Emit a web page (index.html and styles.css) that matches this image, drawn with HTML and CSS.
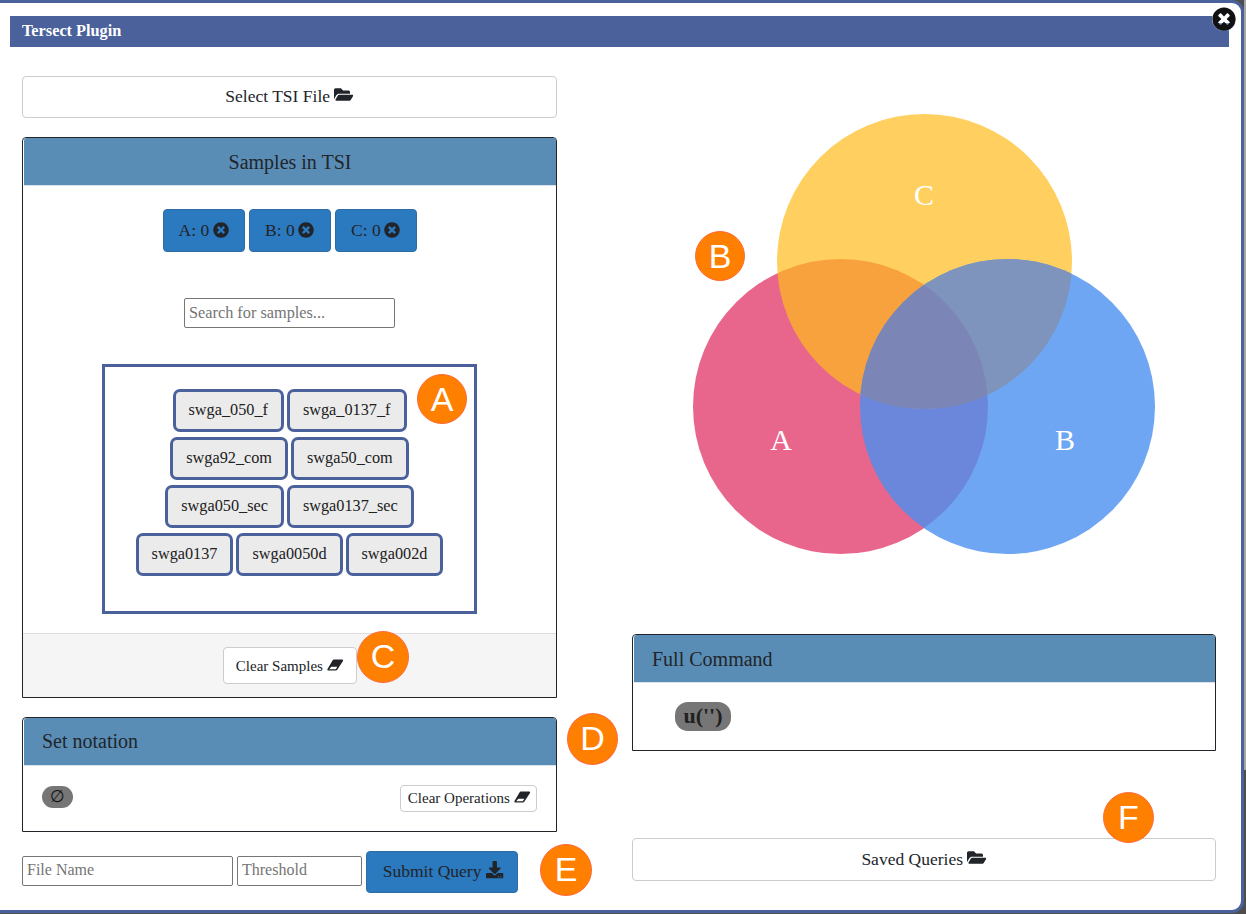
FILE: index.html
```html
<!DOCTYPE html>
<html lang="en">
<head>
    <meta charset="UTF-8">
    <meta name="viewport" content="width=device-width, initial-scale=1.0">
    <title>Tersect Plugin</title>
    <link rel="stylesheet" href="styles.css">
</head>
<body>

<svg class="icon-defs" width="0" height="0">
    <symbol id="i-folder" viewBox="0 0 576 512"><path d="M572.7 292.1L500.3 416.2C493.1 428.6 480 436 465.7 436H65c-18.5 0-30-20-20.7-36l72.4-124.1c7.2-12.4 20.3-19.9 34.6-19.9h400.7c18.5 0 30 20 20.7 36.1zM152 224h328v-48c0-26.5-21.500-48-48-48H272l-64-64H48C21.500 64 0 85.500 0 112v278l69.100-118.400C86.200 242.300 117.900 224 152 224z"/></symbol>
    <symbol id="i-times" viewBox="0 0 512 512"><path d="M256 8C119 8 8 119 8 256s111 248 248 248 248-111 248-248S393 8 256 8zm121.600 313.100c4.700 4.700 4.700 12.300 0 17L338 377.600c-4.700 4.700-12.300 4.700-17 0L256 312l-65.100 65.600c-4.700 4.700-12.300 4.700-17 0L134.400 338c-4.700-4.700-4.700-12.300 0-17l65.600-65-65.600-65.100c-4.700-4.700-4.700-12.300 0-17l39.600-39.600c4.700-4.700 12.300-4.700 17 0l65 65.700 65.100-65.600c4.700-4.700 12.300-4.700 17 0l39.600 39.600c4.700 4.700 4.700 12.300 0 17L312 256l65.600 65.100z"/></symbol>
    <symbol id="i-eraser" viewBox="0 0 32 24"><path fill-rule="evenodd" d="M13 1h17c1.500 0 2.300 1.500 1.500 2.800L20 21.500c-.6.900-1.500 1.500-2.600 1.500H2c-1.600 0-2.400-1.600-1.500-2.900L10.800 2.500C11.400 1.500 12 1 13 1zM8 15.500L4 20.500h13l3.200-5z"/></symbol>
    <symbol id="i-download" viewBox="0 0 512 512"><path d="M216 0h80c13.300 0 24 10.700 24 24v168h87.700c17.800 0 26.700 21.500 14.100 34.100L269.700 378.300c-7.500 7.500-19.800 7.500-27.300 0L90.100 226.100c-12.600-12.600-3.700-34.100 14.100-34.100H192V24c0-13.300 10.700-24 24-24zm296 376v112c0 13.300-10.700 24-24 24H24c-13.300 0-24-10.700-24-24V376c0-13.300 10.700-24 24-24h146.700l49 49c20.100 20.100 52.500 20.100 72.600 0l49-49H488c13.300 0 24 10.700 24 24zm-124 88c0-11-9-20-20-20s-20 9-20 20 9 20 20 20 20-9 20-20zm64 0c0-11-9-20-20-20s-20 9-20 20 9 20 20 20 20-9 20-20z"/></symbol>
</svg>

<div class="scroll-thumb"></div>

<div class="dialog">
    <div class="dialog-title">Tersect Plugin</div>
    <button class="dialog-close" type="button"><svg class="icon"><use href="#i-times"/></svg></button>

    <div class="dialog-body">
        <div class="col-left">
            <button class="btn btn-wide" type="button">Select TSI File <svg class="icon icon-folder"><use href="#i-folder"/></svg></button>

            <div class="panel panel-samples">
                <div class="panel-heading center">Samples in TSI</div>
                <div class="panel-body samples-body">
                    <div class="genome-row">
                        <button class="btn-genome" type="button">A: 0 <svg class="icon"><use href="#i-times"/></svg></button>
                        <button class="btn-genome" type="button">B: 0 <svg class="icon"><use href="#i-times"/></svg></button>
                        <button class="btn-genome" type="button">C: 0 <svg class="icon"><use href="#i-times"/></svg></button>
                    </div>
                    <input class="search" type="text" placeholder="Search for samples...">
                    <div class="sample-box">
                        <div class="sample-row"><span class="sample">swga_050_f</span><span class="sample">swga_0137_f</span></div>
                        <div class="sample-row"><span class="sample">swga92_com</span><span class="sample">swga50_com</span></div>
                        <div class="sample-row"><span class="sample">swga050_sec</span><span class="sample">swga0137_sec</span></div>
                        <div class="sample-row"><span class="sample">swga0137</span><span class="sample">swga0050d</span><span class="sample">swga002d</span></div>
                        <span class="marker marker-a">A</span>
                    </div>
                </div>
                <div class="panel-footer">
                    <button class="btn btn-clear-samples" type="button">Clear Samples <svg class="icon icon-eraser"><use href="#i-eraser"/></svg></button>
                    <span class="marker marker-c">C</span>
                </div>
            </div>

            <div class="panel panel-notation">
                <div class="panel-heading">Set notation</div>
                <div class="panel-body notation-body">
                    <span class="pill pill-empty">&empty;</span>
                    <button class="btn btn-clear-ops" type="button">Clear Operations <svg class="icon icon-eraser"><use href="#i-eraser"/></svg></button>
                </div>
                <span class="marker marker-d">D</span>
            </div>

            <div class="submit-row">
                <input class="field field-name" type="text" placeholder="File Name">
                <input class="field field-threshold" type="text" placeholder="Threshold">
                <button class="btn-submit" type="button">Submit Query <svg class="icon"><use href="#i-download"/></svg></button>
                <span class="marker marker-e">E</span>
            </div>
        </div>

        <div class="col-right">
            <div class="venn">
                <svg class="venn-svg" width="584" height="587" viewBox="0 0 584 587">
                    <defs>
                        <clipPath id="clip-c"><circle cx="292.500" cy="214.500" r="147.500"/></clipPath>
                        <clipPath id="clip-b"><circle cx="375.500" cy="359.500" r="147.500"/></clipPath>
                    </defs>
                    <circle cx="208.500" cy="359.500" r="147.500" fill="#e23f6f" opacity="0.8"/>
                    <circle cx="292.500" cy="214.500" r="147.500" fill="#ffbc1c" opacity="0.7"/>
                    <circle cx="375.500" cy="359.500" r="147.500" fill="#4a90f0" opacity="0.8"/>
                    <!-- the overlaps with C are greyer than plain alpha gives -->
                    <g clip-path="url(#clip-c)">
                        <circle cx="375.500" cy="359.500" r="147.500" fill="#7f94bc"/>
                        <g clip-path="url(#clip-b)">
                            <circle cx="208.500" cy="359.500" r="147.500" fill="#7b86b6"/>
                        </g>
                    </g>
                    <text x="149" y="403">A</text>
                    <text x="433" y="403">B</text>
                    <text x="292" y="158">C</text>
                </svg>
                <span class="marker marker-b">B</span>
            </div>

            <div class="panel panel-command">
                <div class="panel-heading">Full Command</div>
                <div class="panel-body command-body">
                    <span class="pill pill-command">u('')</span>
                </div>
            </div>

            <div class="saved">
                <button class="btn btn-wide btn-saved" type="button">Saved Queries <svg class="icon icon-folder"><use href="#i-folder"/></svg></button>
                <span class="marker marker-f">F</span>
            </div>
        </div>
    </div>
</div>

</body>
</html>
```

FILE: styles.css
```css
* {
    box-sizing: border-box;
}

html,
body {
    margin: 0;
    height: 914px;
    overflow: hidden;
}

body {
    background-color: #4d4d4d;
    font-family: "Liberation Serif", serif;
    color: #212529;
}

.icon-defs {
    display: block;
    height: 0;
}

.icon {
    width: 1em;
    height: 1em;
    fill: currentColor;
    vertical-align: -0.1em;
    overflow: visible;
}

.icon-folder {
    width: 1.1em;
}

.icon-eraser {
    width: 1.1em;
    height: 0.8em;
    vertical-align: -0.02em;
}

button {
    font-family: inherit;
    cursor: pointer;
}

.scroll-thumb {
    position: absolute;
    top: 0;
    right: 0;
    width: 2px;
    height: 770px;
    background: #a6a6a6;
}

.dialog {
    position: relative;
    width: 1260px;
    height: 913px;
    margin-left: -16px;
    background: #fff;
    border: 3px solid #4a619b;
    border-radius: 12px;
    padding: 13px 0 0 23px;
}

.dialog-title {
    background: #4a619b;
    color: #fff;
    font-weight: bold;
    font-size: 16.300px;
    line-height: 29px;
    height: 31px;
    padding-left: 12px;
    width: 1219px;
}

.dialog-close {
    position: absolute;
    top: 4px;
    right: 5px;
    width: 24px;
    height: 24px;
    padding: 0;
    border: none;
    border-radius: 50%;
    background: linear-gradient(#fff 65%, #8c9cc4 65%);
    font-size: 24px;
    line-height: 0;
    color: #111;
}

.dialog-body {
    display: flex;
    padding: 29px 0 0 12px;
}

.col-left {
    width: 535px;
    flex: none;
}

.col-right {
    width: 584px;
    margin-left: 75px;
    flex: none;
}

.btn {
    background: #fff;
    border: 1px solid #ccc;
    border-radius: 4px;
    color: #212529;
}

.btn-wide {
    display: block;
    width: 100%;
    height: 42px;
    font-size: 17.500px;
    padding: 0 0 2px;
}

.panel {
    background: #fff;
    border: 1px solid #212529;
    border-radius: 4px 4px 0 0;
}

.panel-heading {
    background: #5a8db6;
    border-bottom: 1px solid #d9e2ea;
    height: 48px;
    margin: 0 0 0 1px;
    font-size: 20px;
    line-height: 47px;
    padding-left: 18px;
    border-radius: 3px 3px 0 0;
}

.panel-heading.center {
    text-align: center;
    padding-left: 0;
    line-height: 48px;
}

.panel-command .panel-heading {
    line-height: 49px;
}

.panel-samples {
    margin-top: 19px;
    height: 561px;
    display: flex;
    flex-direction: column;
}

.samples-body {
    flex: 1;
    display: flex;
    flex-direction: column;
    align-items: center;
    padding-top: 23px;
}

.genome-row {
    display: flex;
    gap: 4px;
}

.btn-genome {
    width: 82px;
    height: 43px;
    background: #2b79bf;
    border: 1px solid #2e6da4;
    border-radius: 4px;
    color: #212529;
    font-size: 17.500px;
    padding: 0;
}

.btn-genome .icon {
    width: 16px;
    height: 16px;
    margin-left: -1px;
}

.search {
    display: block;
    width: 211px;
    height: 30px;
    margin-top: 46px;
    font-family: inherit;
    font-size: 16.300px;
    padding: 0 4px 1px;
    border: 1px solid #767676;
    border-radius: 2px;
}

.search::placeholder,
.field::placeholder {
    color: #757575;
}

.sample-box {
    position: relative;
    width: 375px;
    height: 250px;
    margin-top: 36px;
    border: 3px solid #4a619b;
    padding: 22px 0;
    display: flex;
    flex-direction: column;
    gap: 5px;
}

.sample-row {
    display: flex;
    justify-content: center;
    gap: 3px;
}

.sample {
    height: 43px;
    line-height: 36px;
    padding: 0 13px;
    font-size: 16.250px;
    background: #ebebeb;
    border: 3px solid #4a619b;
    border-radius: 7px;
    color: #212121;
}

.panel-footer {
    position: relative;
    height: 64px;
    background: #f5f5f5;
    border-top: 1px solid #ddd;
    display: flex;
    justify-content: center;
    padding-top: 13px;
}

.btn-clear-samples {
    height: 37px;
    width: 134px;
    font-size: 15px;
    padding: 1px 0 0;
}

.panel-notation {
    position: relative;
    margin-top: 19px;
    height: 115px;
}

.notation-body {
    display: flex;
    justify-content: space-between;
    align-items: flex-start;
    padding: 19px 19px 0 19px;
}

.pill {
    display: inline-block;
    background: #767676;
    color: #212121;
    text-align: center;
}

.pill-empty {
    width: 31px;
    height: 22px;
    margin-top: 1px;
    line-height: 21px;
    border-radius: 11px;
    font-family: "DejaVu Sans", sans-serif;
    font-size: 17px;
    color: #111;
}

.btn-clear-ops {
    height: 27px;
    width: 137px;
    font-size: 15px;
    padding: 0 0 0 1px;
}

.submit-row {
    position: relative;
    display: flex;
    align-items: center;
    margin-top: 19px;
    height: 42px;
}

.field {
    height: 30px;
    margin-top: -2px;
    font-family: inherit;
    font-size: 16px;
    padding: 0 4px 2px;
    border: 1px solid #767676;
    border-radius: 2px;
}

.field-name {
    width: 211px;
}

.field-threshold {
    width: 125px;
    margin-left: 4px;
}

.btn-submit {
    width: 152px;
    height: 42px;
    margin-left: 4px;
    background: #2b79bf;
    border: 1px solid #2e6da4;
    border-radius: 4px;
    color: #212529;
    font-size: 17.500px;
    padding: 0 0 2px 2px;
}

.venn {
    position: relative;
    height: 587px;
    margin-top: -29px;
}

.venn-svg {
    display: block;
}

.venn-svg text {
    font-size: 30px;
    fill: #fff;
    text-anchor: middle;
}

.panel-command {
    height: 117px;
}

.command-body {
    padding: 19px 0 0 42px;
}

.pill-command {
    width: 56px;
    height: 29px;
    line-height: 28px;
    border-radius: 13px;
    font-size: 22px;
    font-weight: bold;
}

.saved {
    position: relative;
    margin-top: 87px;
}

.btn-saved {
    height: 43px;
    padding: 0;
}

.marker {
    position: absolute;
    width: 50px;
    height: 50px;
    border-radius: 50%;
    background: #ff8000;
    border: 1px solid #ff6a3d;
    color: #fff;
    font-family: "Liberation Sans", sans-serif;
    font-size: 34px;
    line-height: 48px;
    text-align: center;
}

.marker-a {
    top: 7px;
    left: 312px;
}

.marker-b {
    top: 184px;
    left: 63px;
}

.marker-c {
    top: -3px;
    left: 334px;
    width: 52px;
    height: 52px;
}

.marker-d {
    top: -5px;
    left: 544px;
    width: 51px;
    height: 52px;
}

.marker-e {
    top: -7px;
    left: 518px;
    width: 52px;
    height: 52px;
}

.marker-f {
    top: -46px;
    left: 471px;
    width: 51px;
    height: 51px;
}
```
